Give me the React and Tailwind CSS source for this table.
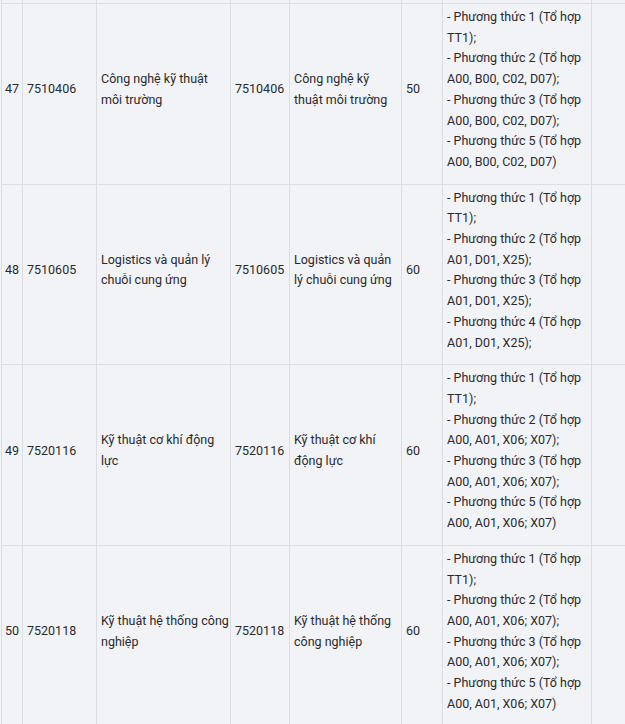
import React from "react";

const rows = [
  {
    stt: "47",
    code: "7510406",
    name: ["Công nghệ kỹ thuật", "môi trường"],
    code2: "7510406",
    name2: ["Công nghệ kỹ", "thuật môi trường"],
    quota: "50",
    methods: [
      "- Phương thức 1 (Tổ hợp",
      "TT1);",
      "- Phương thức 2 (Tổ hợp",
      "A00, B00, C02, D07);",
      "- Phương thức 3 (Tổ hợp",
      "A00, B00, C02, D07);",
      "- Phương thức 5 (Tổ hợp",
      "A00, B00, C02, D07)",
    ],
  },
  {
    stt: "48",
    code: "7510605",
    name: ["Logistics và quản lý", "chuỗi cung ứng"],
    code2: "7510605",
    name2: ["Logistics và quản", "lý chuỗi cung ứng"],
    quota: "60",
    methods: [
      "- Phương thức 1 (Tổ hợp",
      "TT1);",
      "- Phương thức 2 (Tổ hợp",
      "A01, D01, X25);",
      "- Phương thức 3 (Tổ hợp",
      "A01, D01, X25);",
      "- Phương thức 4 (Tổ hợp",
      "A01, D01, X25);",
    ],
  },
  {
    stt: "49",
    code: "7520116",
    name: ["Kỹ thuật cơ khí động", "lực"],
    code2: "7520116",
    name2: ["Kỹ thuật cơ khí", "động lực"],
    quota: "60",
    methods: [
      "- Phương thức 1 (Tổ hợp",
      "TT1);",
      "- Phương thức 2 (Tổ hợp",
      "A00, A01, X06; X07);",
      "- Phương thức 3 (Tổ hợp",
      "A00, A01, X06; X07);",
      "- Phương thức 5 (Tổ hợp",
      "A00, A01, X06; X07)",
    ],
  },
  {
    stt: "50",
    code: "7520118",
    name: ["Kỹ thuật hệ thống công", "nghiệp"],
    code2: "7520118",
    name2: ["Kỹ thuật hệ thống", "công nghiệp"],
    quota: "60",
    methods: [
      "- Phương thức 1 (Tổ hợp",
      "TT1);",
      "- Phương thức 2 (Tổ hợp",
      "A00, A01, X06; X07);",
      "- Phương thức 3 (Tổ hợp",
      "A00, A01, X06; X07);",
      "- Phương thức 5 (Tổ hợp",
      "A00, A01, X06; X07)",
    ],
  },
];

const td = "border border-[#dcdde2] px-[4px] pt-[3px] pb-[11px] align-middle whitespace-nowrap";

function Lines({ items }) {
  return items.map((t, i) => <div key={i}>{t}</div>);
}

export default function App() {
  return (
    <div
      className="w-[625px] h-[724px] overflow-hidden bg-[#f2f3f7] text-[#2a2a2a] text-[12.5px] leading-[20.7px]"
      style={{ fontFamily: "Roboto, 'Liberation Sans', sans-serif" }}
    >
      <table className="table-fixed border-collapse w-[700px] ml-[1px] -mt-[1px]">
        <colgroup>
          <col className="w-[21px]" />
          <col className="w-[74px]" />
          <col className="w-[134px]" />
          <col className="w-[59px]" />
          <col className="w-[112px]" />
          <col className="w-[41px]" />
          <col className="w-[149px]" />
          <col className="w-[110px]" />
        </colgroup>
        <tbody>
          <tr className="h-[4px]">
            {Array.from({ length: 8 }).map((_, i) => (
              <td key={i} className="border border-[#dcdde2] p-0"></td>
            ))}
          </tr>
          {rows.map((r) => (
            <tr key={r.stt}>
              <td className={td + " !px-[3px]"}>{r.stt}</td>
              <td className={td}>{r.code}</td>
              <td className={td}>
                <Lines items={r.name} />
              </td>
              <td className={td}>{r.code2}</td>
              <td className={td}>
                <Lines items={r.name2} />
              </td>
              <td className={td}>{r.quota}</td>
              <td className={td}>
                <Lines items={r.methods} />
              </td>
              <td className={td}></td>
            </tr>
          ))}
        </tbody>
      </table>
    </div>
  );
}
